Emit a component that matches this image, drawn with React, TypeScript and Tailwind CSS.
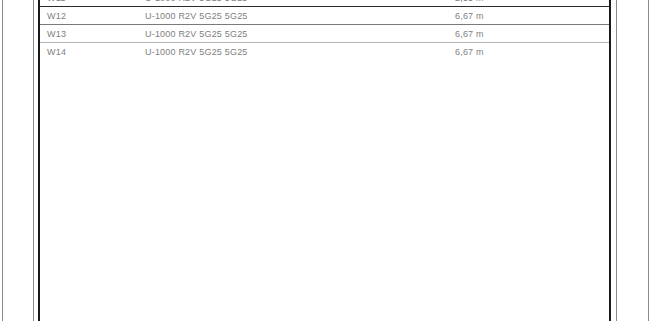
export default function App() {
  const rows = [
    { id: "W11", cable: "U-1000 R2V 5G25 5G25", len: "2,55 m", border: "border-[#2a2a2a]" },
    { id: "W12", cable: "U-1000 R2V 5G25 5G25", len: "6,67 m", border: "border-[#7a7a7a]" },
    { id: "W13", cable: "U-1000 R2V 5G25 5G25", len: "6,67 m", border: "border-[#b4b4b4]" },
    { id: "W14", cable: "U-1000 R2V 5G25 5G25", len: "6,67 m", border: "border-transparent" },
  ];
  return (
    <div className="w-[650px] h-[321px] bg-white overflow-hidden pl-[2px] pr-[1px]" style={{ fontFamily: '"Liberation Sans", Arial, sans-serif' }}>
      <div className="h-full border-x border-[#8a8a8a] pl-[30px] pr-[31px]">
        <div className="h-full border-x border-[#8a8a8a] pl-[4px] pr-[5px]">
          <div className="h-full border-x-2 border-[#1a1a1a] overflow-hidden">
            <div className="-mt-[11px]">
              {rows.map((r) => (
                <div key={r.id} className={`h-[18px] border-b ${r.border} grid grid-cols-[98px_310px_1fr] items-center pt-[2px] text-[9px] tracking-[0.2px] text-[#808080]`}>
                  <div className="pl-[7px]">{r.id}</div>
                  <div className="pl-[7px]">{r.cable}</div>
                  <div className="pl-[7px]">{r.len}</div>
                </div>
              ))}
            </div>
          </div>
        </div>
      </div>
    </div>
  );
}
